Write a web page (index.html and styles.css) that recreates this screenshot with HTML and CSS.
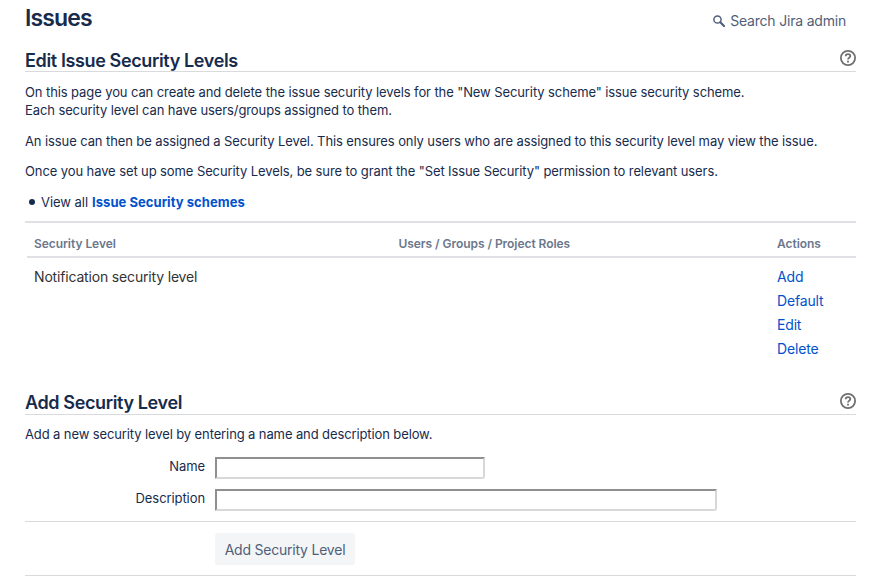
FILE: index.html
```html
<!DOCTYPE html>
<html lang="en">
  <head>
    <meta charset="UTF-8" />
    <meta name="viewport" content="width=device-width, initial-scale=1.0" />
    <title>Edit Issue Security Levels</title>
    <link rel="stylesheet" href="styles.css">
  </head>
  <body>
    <div class="container">
      <header class="page-header">
        <h1>Issues</h1>
        <a class="admin-search" href="#">
          <svg width="12" height="12" viewBox="0 0 12 12" fill="none" stroke="currentColor">
            <circle cx="4.5" cy="4.5" r="3.6" stroke-width="1.5" />
            <path d="M7.3 7.3L11 11" stroke-width="2.1" stroke-linecap="round" />
          </svg>
          <span>Search Jira admin</span>
        </a>
      </header>

      <div class="section-title">
        <h2>Edit Issue Security Levels</h2>
        <a class="help" href="#" aria-label="Help">
          <svg width="16" height="16" viewBox="0 0 16 16" fill="none" stroke="currentColor">
            <circle cx="8" cy="8" r="7.1" stroke-width="1.8" />
            <path d="M5.7 6.3C5.7 4.9 6.7 4.1 8 4.1S10.3 4.9 10.3 6.1C10.3 7.6 8 7.7 8 9.6" stroke-width="1.8" />
            <path d="M8 10.8V12.6" stroke-width="1.9" />
          </svg>
        </a>
      </div>

      <div class="description">
        <p>On this page you can create and delete the issue security levels for the "New Security scheme" issue security scheme.<br />
          Each security level can have users/groups assigned to them.</p>
        <p>An issue can then be assigned a Security Level. This ensures only users who are assigned to this security level may view the issue.</p>
        <p>Once you have set up some Security Levels, be sure to grant the "Set Issue Security" permission to relevant users.</p>
      </div>
      <ul class="links">
        <li>View all <a href="#">Issue Security schemes</a></li>
      </ul>

      <div class="levels">
        <div class="levels-row levels-head">
          <div>Security Level</div>
          <div>Users / Groups / Project Roles</div>
          <div>Actions</div>
        </div>
        <div class="levels-row levels-body">
          <div>Notification security level</div>
          <div></div>
          <div class="actions">
            <a href="#">Add</a>
            <a href="#">Default</a>
            <a href="#">Edit</a>
            <a href="#">Delete</a>
          </div>
        </div>
      </div>

      <div class="section-title">
        <h2 class="add-title">Add Security Level</h2>
        <a class="help" href="#" aria-label="Help">
          <svg width="16" height="16" viewBox="0 0 16 16" fill="none" stroke="currentColor">
            <circle cx="8" cy="8" r="7.1" stroke-width="1.8" />
            <path d="M5.7 6.3C5.7 4.9 6.7 4.1 8 4.1S10.3 4.9 10.3 6.1C10.3 7.6 8 7.7 8 9.6" stroke-width="1.8" />
            <path d="M8 10.8V12.6" stroke-width="1.9" />
          </svg>
        </a>
      </div>

      <form class="add-form">
        <p>Add a new security level by entering a name and description below.</p>
        <div class="field">
          <label for="name">Name</label>
          <input type="text" id="name" name="name" />
        </div>
        <div class="field">
          <label for="description">Description</label>
          <input type="text" id="description" name="description" />
        </div>
        <div class="form-buttons">
          <button type="submit">Add Security Level</button>
        </div>
      </form>
    </div>
  </body>
</html>
```

FILE: styles.css
```css
* {
  box-sizing: border-box;
}
body {
  margin: 0;
  padding: 0;
  height: 576px;
  overflow: hidden;
  background-color: #fff;
  color: #172b4d;
  font-family: Inter, "Liberation Sans", sans-serif;
  font-size: 13px;
  line-height: 18px;
}
.container {
  padding: 0 21px 0 25px;
}
h1,
h2,
p,
ul {
  margin: 0;
  padding: 0;
}
a {
  color: #0052cc;
  text-decoration: none;
}
.page-header {
  display: flex;
  justify-content: space-between;
  align-items: flex-start;
  height: 48px;
  padding-right: 10px;
}
h1 {
  padding-top: 4px;
  font-size: 23px;
  font-weight: 560;
  line-height: 28px;
  letter-spacing: -0.88px;
}
.admin-search {
  display: flex;
  align-items: center;
  gap: 5px;
  padding-top: 11px;
  color: #505f79;
  font-size: 14px;
  line-height: 20px;
  letter-spacing: -0.2px;
}
.section-title {
  display: flex;
  justify-content: space-between;
  height: 24px;
  border-bottom: 1px solid #d9dade;
}
h2 {
  font-size: 18px;
  font-weight: 560;
  line-height: 25px;
  letter-spacing: -0.37px;
}
.add-title {
  line-height: 23px;
}
.help {
  color: #707070;
  height: 16px;
  padding-top: 2px;
}
.help svg {
  display: block;
}
.description {
  padding-top: 11px;
  letter-spacing: -0.1px;
}
.description p {
  margin-bottom: 12.5px;
}
.links {
  margin-bottom: 10px;
  list-style: none;
}
.links li {
  display: flex;
  align-items: center;
  letter-spacing: -0.04px;
}
.links li::before {
  content: "";
  width: 6px;
  height: 6px;
  margin: 0 6px 0 4px;
  border-radius: 50%;
  background-color: #172b4d;
}
.links a {
  margin-left: 4px;
  font-weight: 700;
  letter-spacing: 0.05px;
}
.levels {
  height: 170px;
  border-top: 2px solid #dfe1e6;
}
.levels-row {
  display: grid;
  grid-template-columns: 364.5px 378.5px 1fr;
  margin-left: 2px;
  padding-left: 7px;
}
.levels-head {
  height: 35px;
  padding-top: 12px;
  border-bottom: 2px solid #dfe1e6;
  color: #6b778c;
  font-size: 12px;
  font-weight: 600;
  letter-spacing: -0.05px;
}
.levels-body {
  padding-top: 7px;
  color: #333;
  font-size: 14px;
  line-height: 24px;
  letter-spacing: -0.17px;
}
.actions {
  display: flex;
  flex-direction: column;
}
.add-form p {
  padding-top: 10px;
  margin-bottom: 14px;
  letter-spacing: -0.11px;
}
.field {
  display: flex;
  height: 32px;
}
.field label {
  width: 180px;
  margin-right: 10px;
  text-align: right;
  letter-spacing: -0.08px;
}
.field input {
  height: 22px;
  padding: 0 3px;
  border: 2px solid;
  border-color: #8f8f8f #d8d8d8 #d8d8d8 #8f8f8f;
  border-radius: 0 0 3px 0;
  background-color: #fff;
}
#name {
  width: 270px;
}
#description {
  width: 502px;
}
.form-buttons {
  height: 55px;
  padding: 11px 0 0 190px;
  border-top: 1px solid #d9dade;
  border-bottom: 1px solid #d9dade;
}
.form-buttons button {
  width: 140px;
  height: 32px;
  padding: 2px 0 0;
  border: 0;
  border-radius: 3px;
  background-color: #f4f5f7;
  color: #505f79;
  font-family: inherit;
  font-size: 14px;
  letter-spacing: -0.22px;
}
```
